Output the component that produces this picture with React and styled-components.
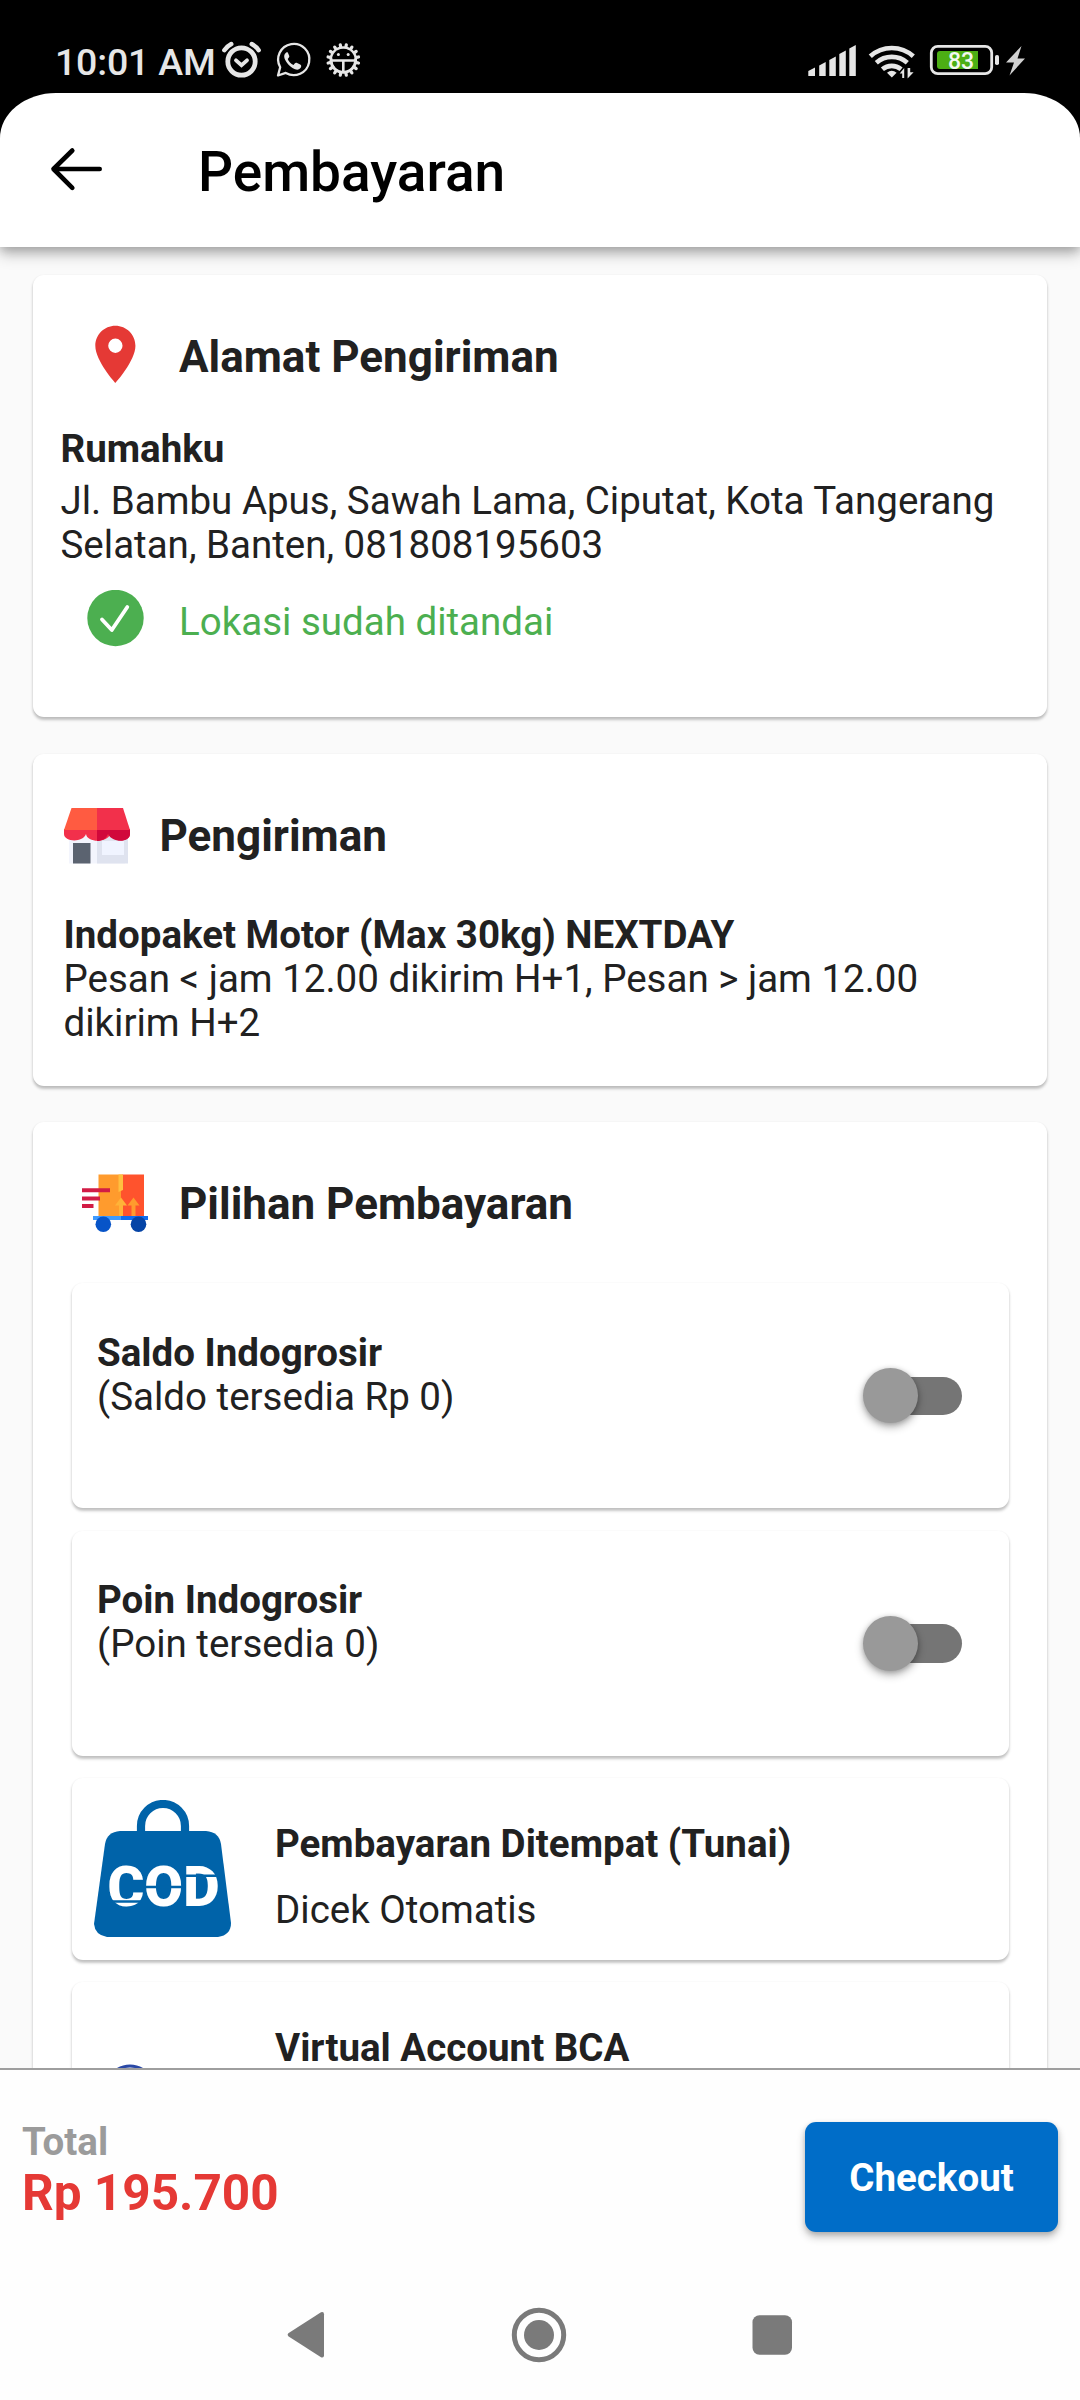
import React from "react";
import styled, { createGlobalStyle } from "styled-components";

const Global = createGlobalStyle`
  * { box-sizing: border-box; }
  body { margin: 0; background: #fafafa; font-family: Roboto, "Liberation Sans", sans-serif; color: #212121; }
  svg { display: block; flex: none; }
`;

const Screen = styled.div`
  width: 1080px;
  height: 2400px;
  overflow: hidden;
  display: flex;
  flex-direction: column;
  background: #fafafa;
`;

const Top = styled.div`
  background: #000;
  flex: none;
  z-index: 1;
  box-shadow: 0 8px 14px rgba(0, 0, 0, 0.2), 0 3px 10px rgba(0, 0, 0, 0.22);
`;

const StatusBar = styled.div`
  height: 93px;
  display: flex;
  justify-content: space-between;
  padding: 40px 53px 13px 55px;
`;

const StatusGroup = styled.div`
  display: flex;
  height: 40px;
`;

const Clock = styled.span`
  width: 165px;
  font-size: 37.5px;
  line-height: 44px;
  font-weight: 500;
  letter-spacing: -0.2px;
  color: #e6e6e6;
  white-space: nowrap;
`;

const AppBar = styled.header`
  height: 154px;
  background: #fff;
  border-radius: 56px 56px 0 0 / 45px 45px 0 0;
  display: flex;
  padding: 46px 0 0 50px;
`;

const Title = styled.h1`
  margin: 1px 0 0 92px;
  font-size: 55px;
  line-height: 64px;
  font-weight: 500;
  color: #000;
`;

const Content = styled.main`
  flex: 1;
  min-height: 0;
  overflow: hidden;
  padding: 28px 33px 0;
  display: flex;
  flex-direction: column;
  gap: 36.5px;
`;

const Card = styled.section`
  flex: none;
  height: ${(p) => p.$height}px;
  padding: ${(p) => p.$pad};
  background: #fff;
  border-radius: 11px;
  box-shadow: 0 2.5px 3px rgba(0, 0, 0, 0.22), 0 1px 3px rgba(0, 0, 0, 0.06);
`;

const IconRow = styled.div`
  display: flex;
  height: ${(p) => p.$height}px;
  gap: ${(p) => p.$gap || 29.5}px;
  padding-left: ${(p) => p.$indent || 0}px;
  margin-top: ${(p) => p.$top || 0}px;
`;

const IconSlot = styled.div`
  width: ${(p) => p.$width || 69}px;
  display: flex;
  justify-content: center;
  flex: none;
`;

const Heading = styled.h2`
  margin: ${(p) => p.$top}px 0 0;
  font-size: 44px;
  line-height: 52px;
  font-weight: 700;
  white-space: nowrap;
`;

const Text = styled.p`
  margin: ${(p) => p.$top || 0}px 0 0;
  font-size: 38.5px;
  line-height: 44px;
  font-weight: ${(p) => (p.$bold ? 700 : 400)};
  color: ${(p) => p.$color || "inherit"};
`;

const Options = styled.div`
  display: flex;
  flex-direction: column;
  gap: 22.5px;
  margin: 40px 38.5px 0 39px;
`;

const Option = styled(Card)`
  display: flex;
  justify-content: space-between;
`;

const Track = styled.div`
  width: 91px;
  height: 38.5px;
  border-radius: 20px;
  background: #757575;
  margin: 46px 47px 0 0;
  display: flex;
  align-items: center;
`;

const Thumb = styled.div`
  width: 55px;
  height: 55px;
  flex: none;
  border-radius: 50%;
  background: #999;
  margin-left: -8px;
  box-shadow: 0 4px 8px rgba(0, 0, 0, 0.3), 0 1px 5px rgba(0, 0, 0, 0.18);
`;

const MethodIcon = styled.div`
  width: 181px;
  flex: none;
`;

const MethodInfo = styled.div`
  flex: 1;
`;

const Footer = styled.footer`
  flex: none;
  height: 182px;
  background: #fefefe;
  border-top: 2.5px solid #9e9e9e;
  display: flex;
  justify-content: space-between;
  padding: 50px 22px 0 22px;
`;

const Amount = styled.div`
  font-size: 49.5px;
  line-height: 58px;
  font-weight: 700;
  color: #e53935;
`;

const Checkout = styled.button`
  width: 253px;
  height: 110px;
  margin-top: 2px;
  padding: 2px 0 0;
  border: 0;
  border-radius: 11px;
  background: #006dc8;
  color: #fff;
  font: 700 38.5px/44px Roboto, sans-serif;
  box-shadow: 0 5px 8px rgba(0, 0, 0, 0.24), 0 2px 5px rgba(0, 0, 0, 0.14);
`;

const NavBar = styled.nav`
  flex: none;
  height: 150px;
  background: #fefefe;
  display: flex;
  padding: 55px 0 0 285px;
`;

const SoftSvg = styled.svg`
  filter: blur(0.6px);
`;

const teeth = Array.from({ length: 16 }, (_, i) => i * 22.5);

const StatusIcons = () => (
  <svg width="150" height="40" viewBox="220 40 150 40" fill="none" stroke="#e6e6e6" strokeLinecap="round">
    <circle cx="241.5" cy="61.5" r="13.7" strokeWidth="4.8" />
    <path d="M236 60.3l5.500 4.900 5.500-4.900" strokeWidth="3.800" />
    <path d="M224.300 50.200q2.500-3.800 7-6.200M258.700 50.200q-2.500-3.800-7-6.200" strokeWidth="4.400" />
    <path d="M278 75.500l2.200-8.300A15.600 15.600 0 1 1 285.800 72.900z" strokeWidth="2.300" strokeLinejoin="round" />
    <path d="M286.200 52.600c-4 2.800-1.400 8.200 2.600 12.400s9.800 6.800 12.200 2.200c.5-1.500.1-2.200-.8-2.700l-3.600-1.700c-.8-.3-1.300 0-1.900.7l-1.200 1.400c-2.500-.8-5-3.400-5.800-5.800l1.200-1.500c.5-.7.6-1.200.3-1.800l-1.400-3.200c-.3-.5-1-.4-1.600 0z" fill="#e6e6e6" stroke="none" />
    <circle cx="343.300" cy="60" r="12.300" strokeWidth="3" />
    {teeth.map((a) => (
      <path key={a} d="M343.300 47.500v-3" strokeWidth="3.200" transform={`rotate(${a + 11.250} 343.300 60)`} />
    ))}
    <path d="M332 58.500a11.500 11.500 0 0 1 5.500-8.300q6-2.800 11.600 0a11.500 11.500 0 0 1 5.500 8.300z" fill="#000" stroke="none" />
    <path d="M331.500 60.500h23.600M343.300 60.500v12" strokeWidth="2.600" strokeLinecap="butt" />
    <circle cx="338.400" cy="54.500" r="1.500" fill="#e6e6e6" stroke="none" />
    <circle cx="348.200" cy="54.500" r="1.500" fill="#e6e6e6" stroke="none" />
  </svg>
);

const SystemIcons = () => (
  <svg width="220" height="40" viewBox="807 40 220 40" fill="#e6e6e6">
    <path d="M808.300 71l6.700-3.500V76h-6.700zM819.200 65.500l6.500-3.500V76h-6.500zM829.300 60l6.500-3.500V76h-6.500zM839.300 54l6.500-3.500V76h-6.500zM849.300 48.500l6.500-3.500V76h-6.500z" />
    <g fill="none" stroke="#e6e6e6" strokeWidth="4.700">
      <path d="M870.300 56.300a32 32 0 0 1 43 0" />
      <path d="M876.300 62.800a23.500 23.500 0 0 1 31 0" />
      <path d="M882.400 69.200a14.500 14.500 0 0 1 18.700 0" />
    </g>
    <path d="M887 72.800q4.700-4 9.600 0l-4.800 4.600z" />
    <path d="M904.200 78v-10l-4.500 5.500h2.500V78zM907.600 68v10.400l6-6.200h-3.400V68z" />
    <rect x="931.300" y="46.300" width="60.400" height="27.400" rx="6.500" fill="none" stroke="#e6e6e6" strokeWidth="2.800" />
    <path d="M940 51h38v18h-38q-3 0-3-3V54q0-3 3-3z" fill="#4caf14" />
    <rect x="995" y="55" width="4" height="10" rx="1.800" />
    <text x="961" y="69" textAnchor="middle" fontFamily="Roboto" fontSize="23" fontWeight="500" fill="#f4f8f0">83</text>
    <path d="M1021.500 46L1006 62.500h8L1009.500 75.500 1025 58.500h-7.500z" fill="#d0d0d0" />
  </svg>
);

const BackArrow = () => (
  <svg width="56" height="60" viewBox="50 139 56 60" fill="none" stroke="#000" strokeWidth="4.600" strokeLinecap="round" strokeLinejoin="round">
    <path d="M99.700 169H53.500M72.300 150.500L53.500 169l18.800 18.800" />
  </svg>
);

const Pin = () => (
  <svg width="68.750" height="68.750" viewBox="0 0 24 24" fill="#e53935">
    <path d="M12 2C8.130 2 5 5.130 5 9c0 5.250 7 13 7 13s7-7.750 7-13c0-3.870-3.130-7-7-7zm0 9.500a2.500 2.500 0 0 1 0-5 2.500 2.500 0 0 1 0 5z" />
  </svg>
);

const CheckCircle = () => (
  <svg width="57" height="57" viewBox="0 0 57 57">
    <circle cx="28.500" cy="28" r="28.200" fill="#4caf50" />
    <path d="M15 29.500l9.800 10.500L40.300 17" fill="none" stroke="#fff" strokeWidth="3.800" strokeLinecap="round" strokeLinejoin="round" />
  </svg>
);

const Store = () => (
  <SoftSvg width="66" height="56" viewBox="0 0 66 56">
    <path d="M5 25h56v30.500H5z" fill="#f3f5fd" />
    <path d="M33 25h31v30.500H33z" fill="#dfe3ef" />
    <path d="M38 33h22v14H38z" fill="#f0f4ff" />
    <rect x="9" y="35" width="17.500" height="20.500" fill="#5b6370" />
    <path d="M0 21h66v5c0 8-16 9-20 0-2 9-23 9-24 0-3 9-22 8-22 0z" fill="#f2304b" />
    <path d="M33 21h33v5c0 9-18 9-22 0-2 5-6 7-11 7z" fill="#d1083b" />
    <path d="M7.500 0H33v22H0z" fill="#ff5b41" />
    <path d="M33 0h26l7 22H33z" fill="#f2304b" />
  </SoftSvg>
);

const Cart = () => (
  <SoftSvg width="66" height="60" viewBox="0 0 66 60">
    <path d="M16.500 .5H40v42H16.500z" fill="#ff9b2d" />
    <path d="M40 .5h22v42H39V18z" fill="#ff532d" />
    <path d="M36.500 .5h4.500V16l-4.500 2z" fill="#ffc040" />
    <path d="M39 23.500l6 8h-4V42h-4V31.500h-4z" fill="#ffb338" />
    <path d="M51.500 23.500l6 8h-4V42h-4V31.500h-4z" fill="#ff9b2d" />
    <path d="M0 14.300h28v4H0zM0 22.500h18v4H0zM0 30h11.500v4H0z" fill="#d21c45" />
    <path d="M11 42h28v4H11z" fill="#3f9bff" />
    <path d="M39 42h27v4H39z" fill="#0f6cf0" />
    <circle cx="21.300" cy="50.300" r="7.800" fill="#0754c8" />
    <circle cx="56.500" cy="50.300" r="7.800" fill="#0544a6" />
  </SoftSvg>
);

const CodBag = () => (
  <svg width="138" height="138" viewBox="0 0 138 138">
    <path d="M47 34V26a22 22 0 0 1 44 0v8" fill="none" stroke="#0063a9" strokeWidth="8.200" />
    <path d="M26 31h86q13 1 15 13l10 79q0 12-13 14H13q-12-2-13-13L11 44q2-12 15-13z" fill="#0063a9" />
    <text x="13.500" y="105.500" textLength="112" lengthAdjust="spacingAndGlyphs" fontFamily="Roboto" fontWeight="900" fontSize="56" fill="#fff">COD</text>
    <path d="M17 101.500h31M51 87h37M91 75.800h32" stroke="#0063a9" strokeWidth="2.500" />
  </svg>
);

const BcaMark = () => (
  <svg width="138" height="130" viewBox="0 0 138 130">
    <circle cx="36" cy="86" r="24" fill="none" stroke="#2a48a5" strokeWidth="3" />
  </svg>
);

const SystemNav = () => (
  <svg width="510" height="60" viewBox="285 2305 510 60" fill="#7a7a7a">
    <path d="M288.300 2333.300L321 2312.300q3-1 3 2v41q0 3-3 2l-32.700-21q-1.500-1.500 0-3z" />
    <circle cx="539" cy="2335" r="24.700" fill="none" stroke="#7a7a7a" strokeWidth="5" />
    <circle cx="539" cy="2335" r="15" />
    <rect x="752.500" y="2315.300" width="39.500" height="39.500" rx="7" />
  </svg>
);

const balances = [
  { name: "Saldo Indogrosir", note: "(Saldo tersedia Rp 0)" },
  { name: "Poin Indogrosir", note: "(Poin tersedia 0)" },
];

export default function App() {
  return (
    <Screen>
      <Global />
      <Top>
        <StatusBar>
          <StatusGroup>
            <Clock>10:01 AM</Clock>
            <StatusIcons />
          </StatusGroup>
          <SystemIcons />
        </StatusBar>
        <AppBar>
          <BackArrow />
          <Title>Pembayaran</Title>
        </AppBar>
      </Top>

      <Content>
        <Card $height={442} $pad="45px 28px 0 27.5px">
          <IconRow $height={70} $indent={20}>
            <IconSlot><Pin /></IconSlot>
            <Heading $top={11}>Alamat Pengiriman</Heading>
          </IconRow>
          <Text $bold $top={37}>Rumahku</Text>
          <Text $top={8}>
            Jl. Bambu Apus, Sawah Lama, Ciputat, Kota Tangerang Selatan, Banten, 081808195603
          </Text>
          <IconRow $height={57} $indent={20} $top={23}>
            <IconSlot><CheckCircle /></IconSlot>
            <Text $color="#4caf50" $top={10}>Lokasi sudah ditandai</Text>
          </IconRow>
        </Card>

        <Card $height={332} $pad="54.5px 30px 0 30.5px">
          <IconRow $height={56} $gap={30}>
            <IconSlot $width={66}><Store /></IconSlot>
            <Heading $top={2}>Pengiriman</Heading>
          </IconRow>
          <Text $bold $top={49}>Indopaket Motor (Max 30kg) NEXTDAY</Text>
          <Text>Pesan &lt; jam 12.00 dikirim H+1, Pesan &gt; jam 12.00 dikirim H+2</Text>
        </Card>

        <Card $height={1000} $pad="52px 0 0">
          <IconRow $height={69} $indent={47.5}>
            <IconSlot><Cart /></IconSlot>
            <Heading $top={4}>Pilihan Pembayaran</Heading>
          </IconRow>
          <Options>
            {balances.map((b) => (
              <Option key={b.name} $height={225} $pad="47.5px 0 0 25px">
                <div>
                  <Text $bold>{b.name}</Text>
                  <Text>{b.note}</Text>
                </div>
                <Track><Thumb /></Track>
              </Option>
            ))}
            <Option $height={181.5} $pad="22px 0 0 22px">
              <MethodIcon><CodBag /></MethodIcon>
              <MethodInfo>
                <Text $bold $top={22}>Pembayaran Ditempat (Tunai)</Text>
                <Text $top={22}>Dicek Otomatis</Text>
              </MethodInfo>
            </Option>
            <Option $height={181.5} $pad="22px 0 0 22px">
              <MethodIcon><BcaMark /></MethodIcon>
              <MethodInfo>
                <Text $bold $top={22}>Virtual Account BCA</Text>
              </MethodInfo>
            </Option>
          </Options>
        </Card>
      </Content>

      <Footer>
        <div>
          <Text $bold $color="#9b9b9b">Total</Text>
          <Amount>Rp 195.700</Amount>
        </div>
        <Checkout>Checkout</Checkout>
      </Footer>
      <NavBar><SystemNav /></NavBar>
    </Screen>
  );
}
